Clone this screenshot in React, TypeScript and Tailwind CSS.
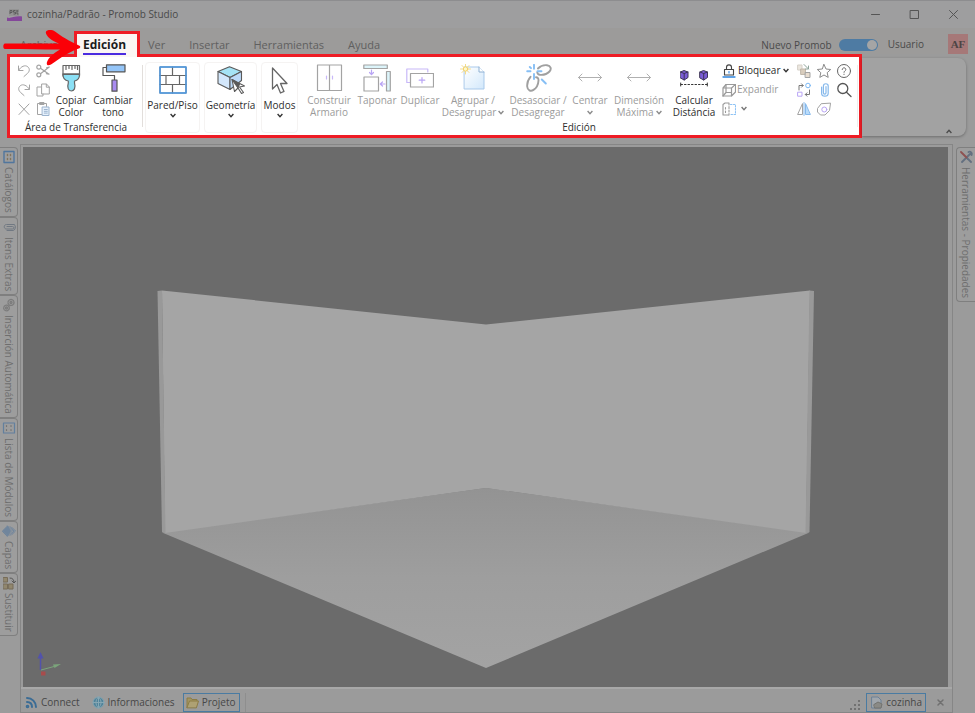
import { useState, type ReactNode } from 'react';

interface IconProps {
  children: ReactNode;
  size?: number;
  width?: number;
  color?: string;
}

function Icon({ children, size = 16, width = 1, color = '#a3a3a3' }: IconProps) {
  return (
    <svg width={size} height={size} viewBox={`0 0 ${size} ${size}`} fill="none" stroke={color} strokeWidth={width} strokeLinejoin="round" strokeLinecap="round" className="shrink-0" aria-hidden="true">
      {children}
    </svg>
  );
}

function Chevron({ color = '#333333' }: { color?: string }) {
  return (
    <svg width="6" height="5" viewBox="0 0 6 5" fill="none" stroke={color} strokeWidth="1.4" className="inline-block shrink-0" aria-hidden="true">
      <path d="M0.6 1 3 3.6 5.4 1" />
    </svg>
  );
}

/* ---------- clipboard ---------- */

const clipboardTools = [
  { label: 'Deshacer', icon: <Icon><path d="M2.5 3v4.5H7M2.8 7C5 3.5 9 1.5 11.8 3.8c2.4 2.1 1.6 4.8-.2 6.5L8 13.5" /></Icon> },
  {
    label: 'Cortar',
    icon: (
      <Icon width={1.2}>
        <circle cx="3.8" cy="4.2" r="2" />
        <circle cx="3.8" cy="11.8" r="2" />
        <path d="M5.5 5.3 14 11.2M5.5 10.7 14.2 4M14.2 4l-2.6 0.8M14 11.2l-2.6-0.6" />
      </Icon>
    ),
  },
  { label: 'Rehacer', icon: <Icon><path d="M13.5 3v4.5H9M13.2 7C11 3.5 7 1.5 4.2 3.8c-2.4 2.1-1.6 4.8.2 6.5L8 13.5" /></Icon> },
  {
    label: 'Copiar',
    icon: (
      <Icon>
        <path d="M6 5H2v9h6v-2M7 2h4.5L14.3 5v7H7z" />
        <path d="M11.3 2.2V5.2h3" />
      </Icon>
    ),
  },
  { label: 'Eliminar', icon: <Icon><path d="M3 3l10 10.5M13 3 3 13.5" /></Icon> },
  {
    label: 'Pegar',
    icon: (
      <Icon>
        <path d="M7 13.5H2.5v-11h9v3" />
        <path d="M5 1.5h4v2H5z" fill="#a3a3a3" />
        <path d="M7.5 6h6.5v8.5H7.5z" fill="#e6f1fc" stroke="#9cb4cf" />
        <path d="M9.3 8.5h3M9.3 10.3h3M9.3 12.1h3" stroke="#9cb4cf" />
      </Icon>
    ),
  },
];

const brushIcon = (
  <Icon size={28} color="#666666" width={1.2}>
    <path d="M6 1.500h16.500V12H6z" fill="#ffffff" />
    <path d="M9 1.500v4M12 1.500v3M15 1.500v4M18 1.500v3M20.500 1.500v4" />
    <path d="M6 10.500h16.500c0 4-1.500 6-5 6.500v2c1.500 5-.5 8-3.200 8s-4.500-3-3-8v-2C7.500 16.500 6 14.500 6 10.500z" fill="#8be0f5" />
    <path d="M6 10h16.500" strokeWidth="1.400" />
  </Icon>
);

const rollerIcon = (
  <Icon size={28} color="#555555" width={1.2}>
    <path d="M7.500 0.800H26v7H7.500z" fill="#94c5f8" />
    <path d="M7.500 3.500H4V11.500h11.500v4.500" />
    <path d="M13 16h5v11.200h-5z" fill="#a98bf0" />
  </Icon>
);

/* ---------- structure ---------- */

const wallIcon = (
  <Icon size={28} color="#666666" width={1.2}>
    <path d="M1 1h26v26H1z" fill="#ffffff" />
    <path d="M1 9.500h26M1 18.500h26M13.500 1v8.500M13.500 18.500V27M7 9.500v9M20.500 9.500v9" />
    <path d="M1 1h26v26H1z" stroke="#4a9be8" strokeWidth="1.400" />
  </Icon>
);

const geometryIcon = (
  <Icon size={28} color="#5a5a5a" width={1.1}>
    <path d="M12.500 0.800 24.500 5.500 13 11.500 1 5.500z" fill="#a5e3f5" />
    <path d="M1 5.500v12l12 6V11.500z" fill="#d3e7fb" />
    <path d="M24.500 5.500v9L13 23.500v-12z" fill="#bcdaf9" />
    <path d="M15 13.500l12.500 6.500-5 1 4 5.500-2 1-3.500-5.500-3.500 3.500z" fill="#ffffff" />
    <path d="M15 13.500l6 8.500 1.500-4z" fill="#5a5a5a" />
  </Icon>
);

const pointerIcon = (
  <Icon size={28} color="#666666" width={1.3}>
    <path d="M6.500 2v21l4.500-4.500 3.500 8.500 3.500-1.600-3.500-7.900h6.500z" fill="#ffffff" />
  </Icon>
);

const structureTools = [
  { label: 'Pared/Piso', icon: wallIcon, width: 'w-[55px]' },
  { label: 'Geometría', icon: geometryIcon, width: 'w-[53px]' },
  { label: 'Modos', icon: pointerIcon, width: 'w-[37px]' },
];

/* ---------- edition ---------- */

const wardrobeIcon = (
  <Icon size={28} width={1.2}>
    <path d="M2.500 1h24v25.500h-24zM14.500 1v25.500" />
    <path d="M11.500 12v3M17.500 12v3" stroke="#c8b8f8" />
  </Icon>
);

const coverIcon = (
  <Icon size={28} width={1.2}>
    <path d="M0.800 1h23.500v3.500H0.800zM23.500 7.500H27.300V27h-3.800z" fill="#dcf4fa" />
    <path d="M1 13h14.500v14H1z" />
    <path d="M8.500 6v4.500M6.500 8.500l2 2.200 2-2.200M22 20h-4.500M19.500 18l-2.200 2 2.200 2" stroke="#b9a5f5" />
  </Icon>
);

const duplicateIcon = (
  <Icon size={28} width={1.2}>
    <path d="M4 18.500H0.800V5h21v3" stroke="#c8b8f8" />
    <path d="M4.500 9.500H27.500V23H4.500z" />
    <path d="M16 13.500v5.500M13.200 16.200h5.600" stroke="#b9a5f5" />
  </Icon>
);

const groupIcon = (
  <Icon size={28} color="#a9c9ea">
    <defs>
      <linearGradient id="sheet" x1="0" y1="0" x2="1" y2="1">
        <stop offset="0" stopColor="#ffffff" />
        <stop offset="1" stopColor="#d2e8fb" />
      </linearGradient>
    </defs>
    <path d="M5.500 3H20l5 5v17H5.500z" fill="url(#sheet)" />
    <path d="M20 3v5h5" fill="#ffffff" stroke="#8fb0d2" />
    <path d="M6.500 0v10M1.500 5h10M3 1.500l7 7M10 1.500l-7 7" stroke="#f5dc8a" />
    <circle cx="6.500" cy="5" r="2.200" fill="#fff8c8" stroke="#f2d16c" />
  </Icon>
);

const unlinkIcon = (
  <Icon size={28} width={1.900} color="#a0a0a0">
    <path d="M14 4.500C16.500 1.800 20 .9 23 1.200c3.800.5 4.800 3.800 2.500 6.300-2.200 2.400-5.800 3.600-9.500 3.300-1.800-.2-2.500-1-2.700-2.500" />
    <path d="M6.500 12.800c-2.500 2.800-3.500 6.500-3.300 9.700.3 3.800 3.500 5.200 6.300 3.400 3.200-2 4.800-6 5-9.400.1-2-.8-3.200-2.500-3.200" />
    <path d="M10 .800v4M3.200 7.300H6.500M10 10v5M13.500 7.300h4M17.800 15.500l4 4M5.800 3l1.200 1.200" stroke="#86bff5" />
  </Icon>
);

const widthIcon = (
  <Icon size={28} color="#b0b0b0">
    <path d="M2.500 13.500h23M6 10l-3.500 3.500L6 17M22 10l3.500 3.500L22 17" />
  </Icon>
);

const distanceIcon = (
  <Icon size={28} color="#3d3358">
    <path d="M0.500 8 4 6.500 8 8v5.500L4.200 16 .5 14z" fill="#7a5cd6" />
    <path d="M.5 8l3.700 1.500L8 8M4.200 9.500V16" />
    <path d="M20 8l3.500-1.500L27.500 8v5.500L23.700 16 20 14z" fill="#7a5cd6" />
    <path d="M20 8l3.700 1.500L27.500 8M23.700 9.500V16" />
    <path d="M1 20.500h26" stroke="#333333" strokeDasharray="1.500 2" />
    <path d="M.7 19v3M27.300 19v3" stroke="#333333" />
  </Icon>
);

interface EditTool {
  lines: string[];
  icon: ReactNode;
  width: string;
  menu?: boolean;
  enabled?: boolean;
}

const editTools: EditTool[] = [
  { lines: ['Construir', 'Armario'], icon: wardrobeIcon, width: 'w-[50px]' },
  { lines: ['Taponar'], icon: coverIcon, width: 'w-[46px]' },
  { lines: ['Duplicar'], icon: duplicateIcon, width: 'w-[40px]' },
  { lines: ['Agrupar /', 'Desagrupar'], icon: groupIcon, width: 'w-[66px]', menu: true },
  { lines: ['Desasociar /', 'Desagregar'], icon: unlinkIcon, width: 'w-[64px]' },
  { lines: ['Centrar', ''], icon: widthIcon, width: 'w-[40px]', menu: true },
  { lines: ['Dimensión', 'Máxima'], icon: widthIcon, width: 'w-[58px]', menu: true },
  { lines: ['Calcular', 'Distáncia'], icon: distanceIcon, width: 'w-[52px]', enabled: true },
];

const lockIcon = (
  <Icon size={14} color="#444444" width={1.1}>
    <path d="M2.500 5.500h9v5.500h-9z" fill="#ffffff" />
    <path d="M4.500 5.500V3.500C4.500 0 9.500 0 9.500 3.500v2" />
    <path d="M7 7.500v1.500" stroke="#2f86e0" />
    <path d="M1 13h12" stroke="#2f86e0" strokeWidth="1.300" />
  </Icon>
);

const expandIcon = (
  <Icon size={14} width={1.2} color="#999999">
    <path d="M1 5h8.500v8H1zM1 5 4 1.500h9.500L9.500 5M13.500 1.500v7.500L9.500 13" />
    <path d="M4 1.500V9.500h5M4 9.500 1 13" />
  </Icon>
);

const flipIcon = (
  <Icon size={14} width={1.1} color="#999999">
    <path d="M6.500 13H1V2.500L3 1h3.500" />
    <path d="M7 1v12" strokeDasharray="2 1.500" />
    <path d="M8.500 2.500h5v10h-5" stroke="#8cc2f5" strokeDasharray="1.500 1.500" />
    <path d="M3.500 5.500v1.500M3.500 9v1.500" />
  </Icon>
);

const smallTools = [
  {
    label: 'Escalonar',
    icon: (
      <Icon>
        <path d="M2 2h4v5H2z" fill="#ece7df" stroke="#d6d0c8" />
        <path d="M5 6h4.500v5.500H5z" fill="#d9cdbd" stroke="#c2b8ab" />
        <path d="M9.500 9.500h4.500v5H9.500z" fill="#e8ddd0" />
        <path d="M8 1.500 12.500 6M12.500 3v3h-3" stroke="#8fa49b" />
      </Icon>
    ),
  },
  { label: 'Favoritos', icon: <Icon color="#8a8a8a"><path d="M8 1.500l2 4.500 4.700.5-3.500 3.200 1 4.700L8 12l-4.200 2.400 1-4.700-3.500-3.200L6 6z" /></Icon> },
  {
    label: 'Ayuda contextual',
    icon: (
      <Icon color="#666666">
        <circle cx="8" cy="8" r="6.500" />
        <path d="M6.200 6.500c0-2.300 3.600-2.300 3.600 0C9.800 8 8 7.800 8 9.300M8 11.200v.3" />
      </Icon>
    ),
  },
  {
    label: 'Reemplazar',
    icon: (
      <Icon>
        <path d="M3 8V3.500h4M5.500 1.800 7.200 3.500 5.500 5.200M13.500 8v4.500H9.500M11 10.800 9.300 12.500 11 14.200" stroke="#777777" />
        <circle cx="12" cy="3.500" r="2.300" stroke="#7ab8f5" />
        <path d="M2 10.200h4v4H2z" stroke="#b9a5f5" />
      </Icon>
    ),
  },
  { label: 'Adjuntar', icon: <Icon color="#86b9ec" width={1.2}><path d="M10 4.500v6.300c0 1.800-2.600 1.800-2.600 0V4c0-3 4.800-3 4.800 0v7.200c0 4-6.600 4-6.600 0V5" /></Icon> },
  {
    label: 'Buscar',
    icon: (
      <Icon color="#555555" width={1.3}>
        <circle cx="6.800" cy="6.500" r="5" />
        <path d="M10.500 10.200 15 14.500" />
      </Icon>
    ),
  },
  {
    label: 'Espejar',
    icon: (
      <Icon>
        <path d="M6.500 3v10.500H2z" />
        <path d="M9.500 3v10.500H14z" fill="#b9dcfb" stroke="#86b9ec" />
        <path d="M8 1.500v13" stroke="#86b9ec" />
      </Icon>
    ),
  },
  {
    label: 'Material',
    icon: (
      <Icon>
        <path d="M14.500 2.500 13.500 9.500 9 14H4.500L1.500 11V7.500L5 3z" />
        <circle cx="8.300" cy="8.500" r="2.500" stroke="#b9a5f5" />
      </Icon>
    ),
  },
];

/* ---------- docks ---------- */

const docks = [
  {
    label: 'Catálogos',
    icon: (
      <Icon size={14} color="#3f6d9e" width={1.4}>
        <path d="M2 1.500h10v11H2z" />
        <path d="M5.500 4.500v1M8.500 4.500v1M5.500 8.500v1M8.500 8.500v1" stroke="#7c6b4c" />
      </Icon>
    ),
  },
  { label: 'Itens Extras', icon: <Icon size={14} color="#66707c"><path d="M12 4.500H4.500c-3 0-3 4.500 0 4.500h6c1.800 0 1.800-2.500 0-2.500H5M12 4.500c2 0 2 5.500-1 6H5" /></Icon> },
  {
    label: 'Inserción Automática',
    icon: (
      <Icon size={14} color="#747474" width={1.3}>
        <circle cx="9" cy="4.500" r="3" strokeDasharray="1.500 1" />
        <circle cx="4.500" cy="10" r="2.800" strokeDasharray="1.500 1" />
        <circle cx="9" cy="4.500" r="1" />
        <circle cx="4.500" cy="10" r="1" />
      </Icon>
    ),
  },
  {
    label: 'Lista de Módulos',
    icon: (
      <Icon size={14} color="#54799f" width={1.2}>
        <path d="M1.500 2h11v10h-11z" />
        <path d="M4.500 4.500v1M4.500 8.500v1M9 4.500v1M9 8.500v1" stroke="#6b6b6b" />
      </Icon>
    ),
  },
  {
    label: 'Capas',
    icon: (
      <Icon size={14} color="#66809c">
        <path d="M.5 7 5.500 2l3 5-3 5z" fill="#66809c" />
        <path d="M5.500 2l5 5-5 5M8 2.500 12 7l-4 4.500M10 3.500 13.500 7 10 10.500" />
      </Icon>
    ),
  },
  {
    label: 'Sustituir',
    icon: (
      <Icon size={14} color="#6e6048">
        <path d="M1.500 1.500h4v4.500h-4zM1.500 8h4v5h-4zM7 8h4v5H7z" fill="#8f8263" />
        <path d="M8 2c3 0 4 2 4 4.500M10 5l2 2 1.800-2" stroke="#444444" />
      </Icon>
    ),
  },
];

function Tabs({ names }: { names: string[] }) {
  return (
    <>
      {names.map(name => (
        <button key={name} className="pb-px text-[11px] leading-4 text-[#606060]">{name}</button>
      ))}
    </>
  );
}

function TitleBar() {
  return (
    <header className="flex h-[28px] shrink-0 items-center justify-between border-t border-[#8d8d8f] bg-[#9e9e9f] pl-[7px]">
      <div className="flex items-center gap-[5px]">
        <svg width="15" height="14" viewBox="0 0 15 14" aria-hidden="true">
          <path d="M2 1h10v7H2z" fill="#939393" />
          <path d="M3 6V2.500h2v2H3M8.500 2.500h-2v1.700h2V6h-2M10 2v4h1.500M9.500 3h2" fill="none" stroke="#5c5c5c" />
          <path d="M0 9.500c4 1.500 7-2 15-1V13H0z" fill="#84479a" />
        </svg>
        <h1 className="text-[10px] text-[#4a4a4a]">cozinha/Padrão - Promob Studio</h1>
      </div>
      <div className="flex pr-[2px]">
        <button aria-label="Minimizar" className="flex w-[39px] justify-center"><Icon size={11} color="#555555"><path d="M1.500 5.500h8" /></Icon></button>
        <button aria-label="Maximizar" className="flex w-[39px] justify-center"><Icon size={11} color="#555555"><path d="M1.500 1.500h8v8h-8z" /></Icon></button>
        <button aria-label="Cerrar" className="flex w-[39px] justify-center"><Icon size={11} color="#555555"><path d="M1.500 1.500l8 8M9.500 1.500l-8 8" /></Icon></button>
      </div>
    </header>
  );
}

function MenuBar() {
  const [modern, setModern] = useState(true);

  return (
    <nav className="relative z-10 flex h-[26px] shrink-0 items-end justify-between bg-[#9c9b9a]">
      <div className="flex items-end pl-5">
        <div className="flex w-[54px]"><Tabs names={['Archivo']} /></div>
        <button className="-mb-[3px] flex w-[66px] flex-col items-center border-3 border-b-0 border-[#ee1c25] bg-[#fbf6f4] pt-[3px] pr-[5px] pb-[2px] text-xs leading-4 font-bold text-[#1c1c1c]">
          <span className="border-b-2 border-[#4b2be0]">Edición</span>
        </button>
        <div className="flex gap-6 pl-2"><Tabs names={['Ver', 'Insertar', 'Herramientas', 'Ayuda']} /></div>
      </div>
      <div className="flex items-center pr-[7px] text-[10px] text-[#4a4a4a]">
        <label className="flex items-center gap-[7px] pt-[2px]">
          Nuevo Promob
          <input type="checkbox" role="switch" checked={modern} onChange={e => setModern(e.target.checked)} className="peer sr-only" />
          <span className="flex h-3 w-[39px] items-center justify-end rounded-full bg-[#4e7ba3] p-px">
            <span className="size-[10px] rounded-full bg-[#a5a5a5]" />
          </span>
        </label>
        <button className="ml-[10px] pt-px">Usuario</button>
        <span className="ml-6 flex size-5 items-center justify-center bg-[#a67878] font-['Liberation_Serif',serif] text-[11px] font-bold text-[#4c4444]">AF</span>
      </div>
      <svg width="80" height="38" viewBox="0 0 80 38" className="absolute top-[2px] left-[2px]" aria-hidden="true">
        <path d="M3 13.500C1 13.500 .5 18.800 3 19C20 19.500 40 19.300 58 19.500C51 23.500 47 27 45 32C44 35.500 46.500 36 49 34.500C57 29 66 22 77.500 18.200Q79 17 77.500 15.800C68 11.500 58 5.500 53 1.500C50 -.5 45 -.5 43.800 2C43.500 6 50 11 57 13.500C40 13.800 20 13.200 3 13.500z" fill="#fb0007" />
      </svg>
    </nav>
  );
}

function ClipboardGroup() {
  return (
    <section className="flex w-[132px] flex-col">
      <div className="flex h-16 pt-1 pl-1">
        <div className="grid grid-cols-[19px_19px] grid-rows-[19px_19px_19px] place-items-center">
          {clipboardTools.map(t => (
            <button key={t.label} aria-label={t.label}>{t.icon}</button>
          ))}
        </div>
        <button className="flex w-[38px] flex-col items-center gap-[2px] pt-[3px] text-[10px] leading-3">
          {brushIcon}
          <span>Copiar<br />Color</span>
        </button>
        <button className="flex w-[46px] flex-col items-center gap-[2px] pt-[3px] text-[10px] leading-3">
          {rollerIcon}
          <span>Cambiar<br />tono</span>
        </button>
      </div>
      <h2 className="text-center text-[10px] leading-3">Área de Transferencia</h2>
    </section>
  );
}

function EditionGroup() {
  return (
    <section className="flex flex-col">
      <div className="flex h-16 items-start">
        {editTools.map(t => (
          <button key={t.lines.join()} className={`flex flex-col items-center gap-[2px] pt-[7px] text-[10px] leading-3 whitespace-nowrap ${t.width} ${t.enabled ? '' : 'text-[#9b9b9b]'}`}>
            {t.icon}
            <span>
              {t.lines.map((line, i) => (
                <span key={i} className="flex h-3 items-center justify-center gap-[2px]">
                  {line}
                  {t.menu && i === 1 && <Chevron color="#8a8a8a" />}
                </span>
              ))}
            </span>
          </button>
        ))}
        <div className="flex w-[74px] flex-col pt-1 pl-[2px] text-[10px]">
          <button className="flex h-[19px] items-center gap-[2px] whitespace-nowrap">{lockIcon}Bloquear<Chevron /></button>
          <button className="flex h-[19px] items-center gap-[1px] text-[#9b9b9b]">{expandIcon}Expandir</button>
          <button aria-label="Voltear" className="flex h-[19px] items-center gap-[5px]">{flipIcon}<Chevron color="#777777" /></button>
        </div>
        <div className="grid grid-cols-[20px_20px_20px] grid-rows-[19px_19px_19px] place-items-center pt-1">
          {smallTools.map(t => (
            <button key={t.label} aria-label={t.label}>{t.icon}</button>
          ))}
        </div>
      </div>
      <h2 className="text-center text-[10px] leading-3">Edición</h2>
    </section>
  );
}

function Ribbon() {
  return (
    <div className="flex h-[84px] shrink-0 pr-[9px] pl-[7px]">
      <div className="flex shrink-0 border-3 border-[#ee1c25] bg-white text-[#2e2e2e]">
        <ClipboardGroup />
        <div className="my-2 w-px bg-[#e2dedb]" />
        <div className="flex gap-[4px] px-[2px] pt-[5px] pb-[2px]">
          {structureTools.map(t => (
            <button key={t.label} className={`flex flex-col items-center rounded-sm border border-[#f5f3f2] pt-[3px] text-[10px] leading-3 ${t.width}`}>
              {t.icon}
              <span className="mt-[5px] mb-[2px]">{t.label}</span>
              <Chevron />
            </button>
          ))}
        </div>
        <div className="pl-1"><EditionGroup /></div>
        <div className="my-2 mr-px ml-[3px] w-px bg-[#eeeeee]" />
      </div>
      <div className="mt-1 mb-[2px] flex flex-1 items-end justify-end rounded-r-lg bg-[#a2a2a2] pr-[14px] pb-[2px] shadow-[0_1px_3px_rgba(0,0,0,0.3)]">
        <button aria-label="Contraer cinta" className="flex rotate-180"><Chevron color="#4c4c4c" /></button>
      </div>
    </div>
  );
}

function Viewport() {
  return (
    <div className="min-h-0 flex-1 bg-[#6b6b6b]">
      <svg className="block h-full w-full" viewBox="23 147 925 540" preserveAspectRatio="xMidYMid slice" role="img" aria-label="Vista 3D">
        <defs>
          <linearGradient id="floor" x1="0" y1="0" x2="0" y2="1">
            <stop offset="0" stopColor="#939393" />
            <stop offset="0.5" stopColor="#9e9e9e" />
            <stop offset="1" stopColor="#a3a3a3" />
          </linearGradient>
        </defs>
        <path d="M162 532.500 486 488 809.500 532.500 486 668z" fill="url(#floor)" />
        <path d="M162 290.500 486 324.500V488L165 533z" fill="#a5a5a5" />
        <path d="M486 324.500 810 290.500 806 533 486 488z" fill="#a5a5a5" />
        <path d="M157.500 291 162 290.500 165.500 533.500 162 532z" fill="#999999" />
        <path d="M814 291 809.500 290.500 805.500 533.500 809.500 532z" fill="#999999" />
        <path d="M40.500 670V657" stroke="#5252ac" strokeWidth="1.500" />
        <path d="M37.500 658.500l3-6.500 3 6.500z" fill="#5252ac" />
        <path d="M41 670l13-3.500" stroke="#7ba57b" />
        <path d="M53 664.500l8-.5-6.500 4z" fill="#7ba57b" />
        <path d="M41 671.500h4.500v4H41z" fill="#a84c4c" />
      </svg>
    </div>
  );
}

function StatusBar() {
  return (
    <footer className="flex h-[25px] shrink-0 items-center justify-between border-t-2 border-[#a8a8a8] pt-[3px] text-[10px] text-[#474747]">
      <div className="flex items-center pl-1">
        <button className="flex items-center gap-[3px]">
          <Icon size={13} color="#3b6c95" width={2}>
            <path d="M2 6c3 0 5 2 5 5M2 2c5 0 9 4 9 9" />
            <circle cx="2.500" cy="10.500" r="0.800" />
          </Icon>
          Connect
        </button>
        <button className="ml-3 flex items-center gap-[3px]">
          <Icon size={13} color="#87a7b3">
            <circle cx="6.500" cy="6.500" r="5.500" fill="#50839a" />
            <path d="M6.500 1v11M1 6.500h11M6.500 1c-3.500 3-3.500 8 0 11M6.500 1c3.500 3 3.500 8 0 11" />
          </Icon>
          Informaciones
        </button>
        <button className="ml-[8px] flex h-[19px] items-center gap-[3px] border border-[#4a7ba2] px-[2px]">
          <Icon size={13} color="#8c7c45">
            <path d="M1 11.500V2h4l1 1.500h5V5" fill="#a39563" />
            <path d="M1 11.500 3.500 5H12.500l-2 6.500z" fill="#aea173" />
          </Icon>
          <span className="pr-[2px]">Projeto</span>
        </button>
        <div className="ml-[5px] h-[19px] w-px bg-[#8e8e8e]" />
      </div>
      <div className="flex items-center pr-[7px]">
        <svg width="10" height="10" viewBox="0 0 10 10" fill="#717171" className="mt-[5px] mr-[6px]" aria-hidden="true">
          <path d="M8 0h2v2H8zM4 4h2v2H4zM8 4h2v2H8zM0 8h2v2H0zM4 8h2v2H4zM8 8h2v2H8z" />
        </svg>
        <button className="flex h-[19px] items-center gap-[3px] border border-[#4a7ba2] px-[3px]">
          <Icon size={13} color="#6b8097">
            <path d="M2 1h6l3 3v8H2z" fill="#a0a6ac" />
            <path d="M4 8.500 8 6l4 2-1 4H5z" fill="#8a8a86" stroke="#73736f" />
          </Icon>
          cozinha
        </button>
        <button aria-label="Cerrar proyecto" className="ml-[10px]"><Icon size={9} color="#707070" width={1.5}><path d="M2 2l5 5M7 2 2 7" /></Icon></button>
      </div>
    </footer>
  );
}

export default function App() {
  return (
    <div className="flex h-screen flex-col overflow-hidden bg-[#9b9b9b] font-['Open_Sans','Noto_Sans',sans-serif]">
      <TitleBar />
      <MenuBar />
      <Ribbon />
      <main className="mt-[6px] flex min-h-0 flex-1">
        <aside className="flex w-5 shrink-0 flex-col items-start pt-[3px]">
          {docks.map(d => (
            <button key={d.label} className="flex w-[18px] items-center gap-[3px] rounded-r-sm border border-l-0 border-[#7f7f7f] bg-[#9d9d9d] pt-[2px] pb-[3px] text-[10px] leading-4 whitespace-nowrap text-[#6e6e6e] [writing-mode:vertical-rl]">
              <span className="opacity-80">{d.icon}</span>
              {d.label}
            </button>
          ))}
        </aside>
        <div className="flex min-w-0 flex-1 flex-col border border-[#868686] pt-[2px]">
          <div className="flex min-h-0 flex-1 pr-[4px] pl-[2px]"><Viewport /></div>
          <StatusBar />
        </div>
        <aside className="flex w-[22px] shrink-0 flex-col items-end pt-[3px]">
          <button className="flex w-[19px] items-center gap-[3px] rounded-l-sm border border-r-0 border-[#7f7f7f] bg-[#9d9d9d] pt-[2px] pb-[3px] text-[10px] leading-4 whitespace-nowrap text-[#6e6e6e] [writing-mode:vertical-rl]">
            <span className="opacity-80">
              <Icon size={14} color="#56657a" width={1.8}>
                <path d="M3 12 11 4M9.500 2c2-1 4 1 3 3" />
                <path d="M2 2l6 6" stroke="#8c3f3f" />
                <path d="M8.500 8.500 12 12" />
              </Icon>
            </span>
            Herramientas - Propiedades
          </button>
        </aside>
      </main>
    </div>
  );
}
